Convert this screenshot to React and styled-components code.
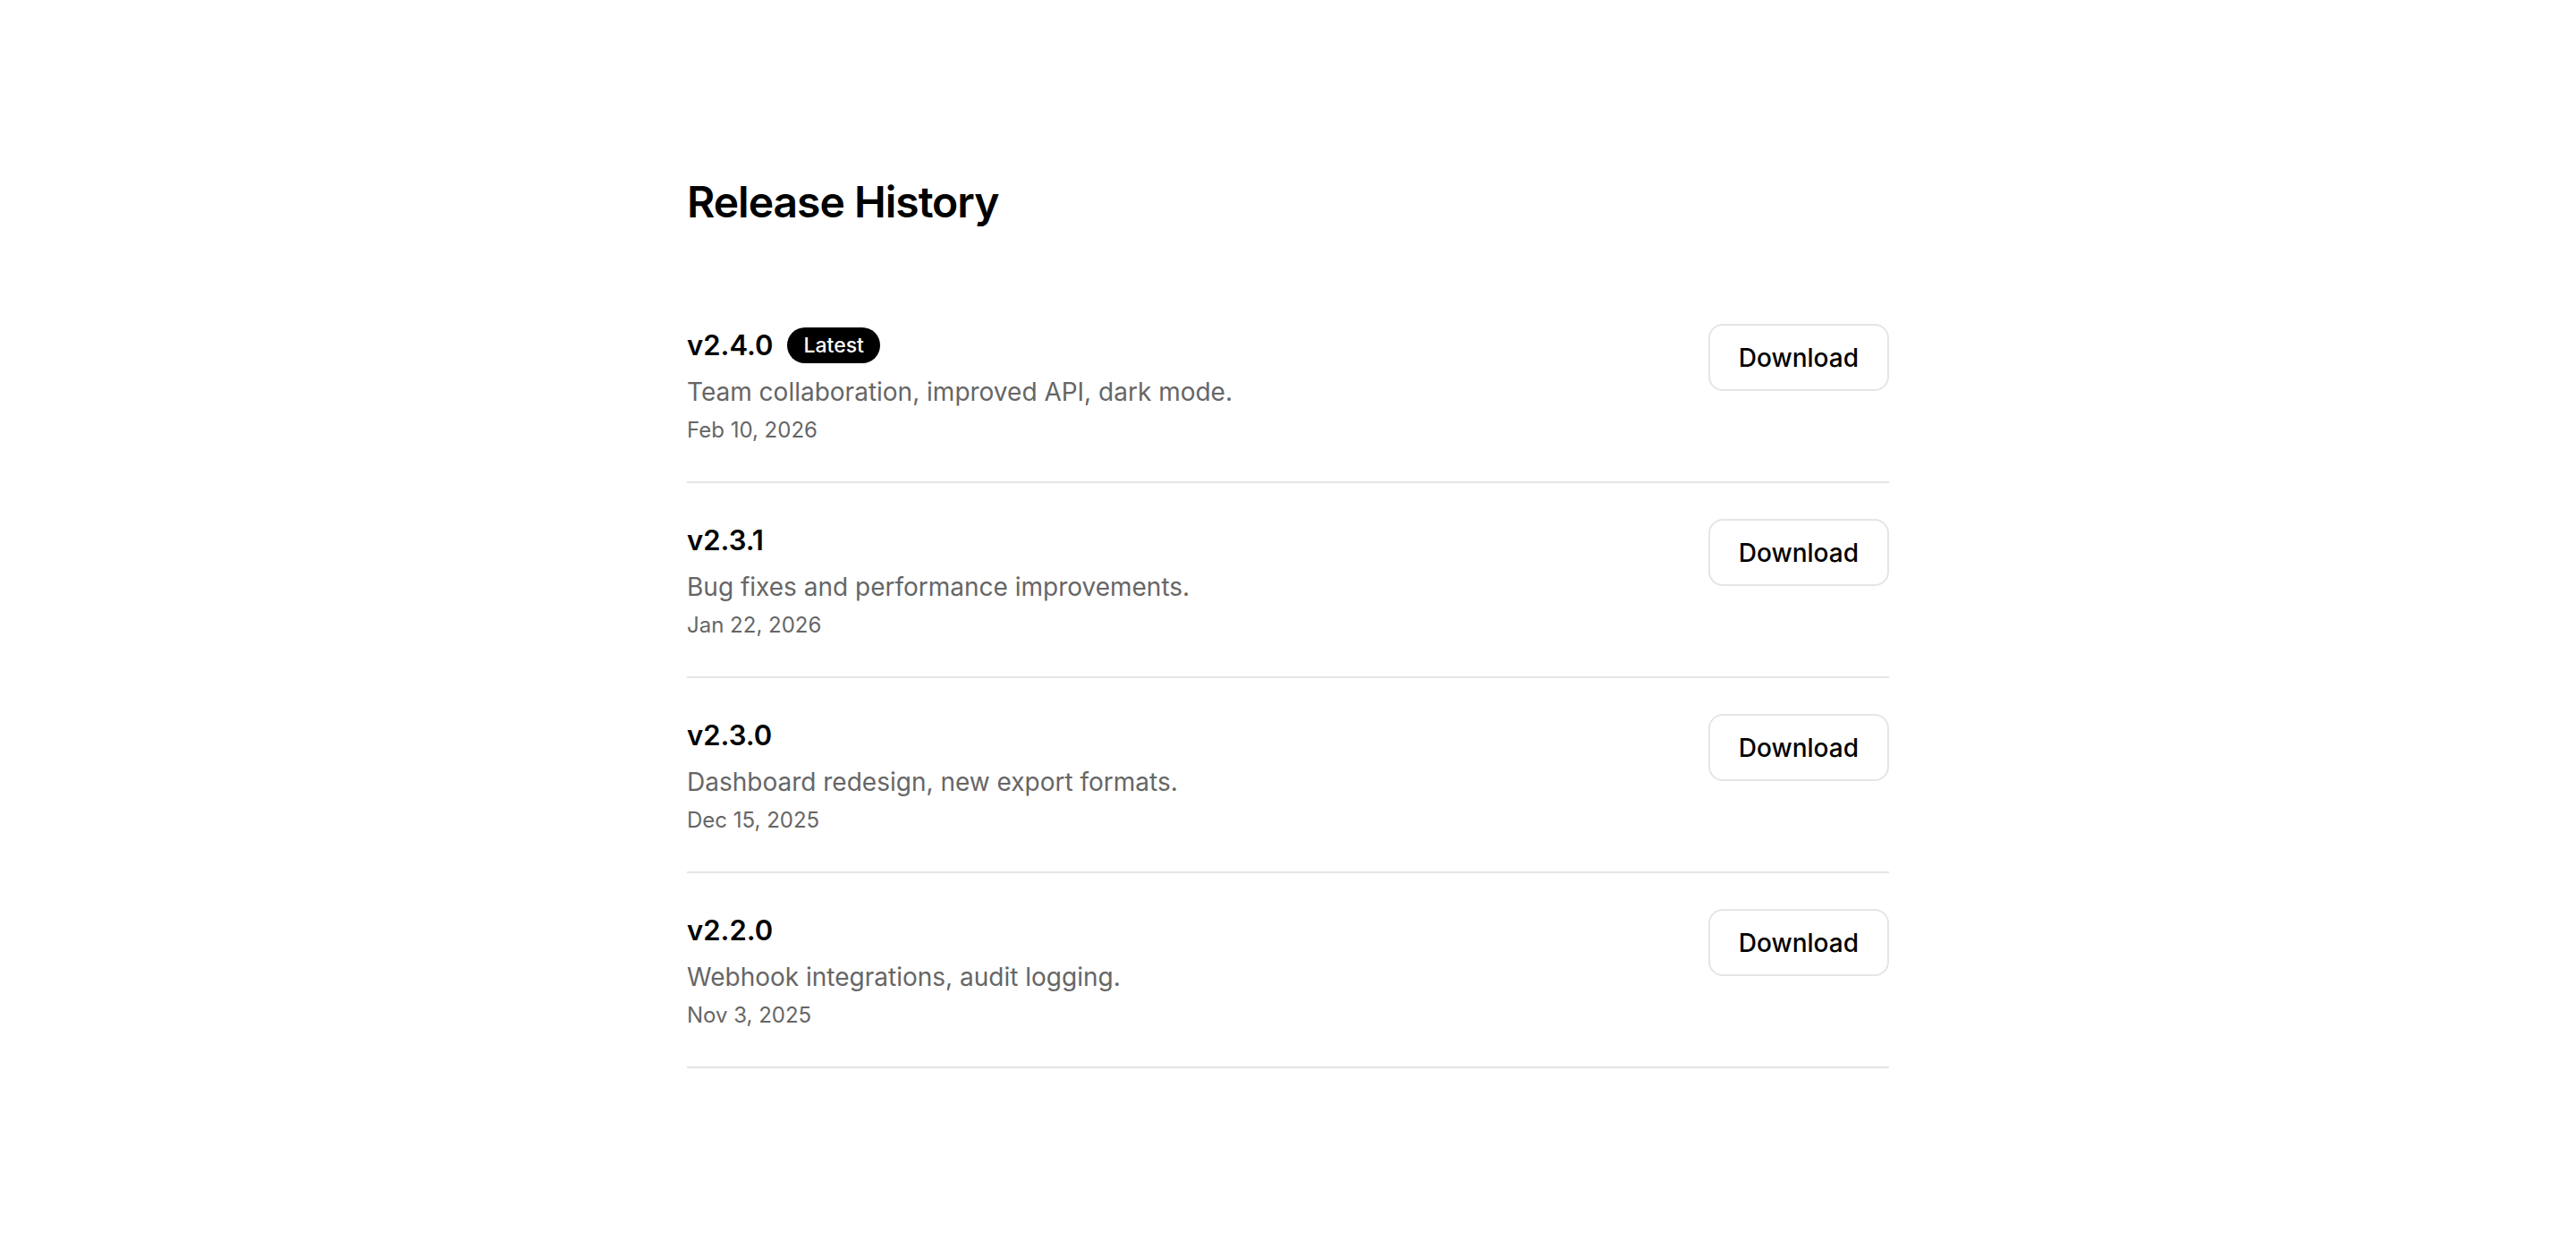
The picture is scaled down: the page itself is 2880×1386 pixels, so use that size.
import React from "react";
import styled, { createGlobalStyle } from "styled-components";

const GlobalStyle = createGlobalStyle`
  html, body {
    margin: 0;
    padding: 0;
    background: #ffffff;
  }
  body {
    font-family: Inter, "Noto Sans", "Liberation Sans", sans-serif;
    color: #000000;
    -webkit-font-smoothing: antialiased;
  }
`;

const Page = styled.main`
  display: flex;
  justify-content: center;
  padding: 197px 0 120px;
`;

const Container = styled.section`
  width: 1344px;
  display: flex;
  flex-direction: column;
`;

const Title = styled.h1`
  margin: 0 0 67px;
  font-size: 48px;
  line-height: 58px;
  font-weight: 600;
  letter-spacing: -1px;
  color: #000000;
`;

const List = styled.ul`
  list-style: none;
  margin: 0;
  padding: 0;
  display: flex;
  flex-direction: column;
`;

const Row = styled.li`
  display: flex;
  justify-content: space-between;
  align-items: flex-start;
  padding: 40px 0 39px;
  border-bottom: 2px solid #e5e5e5;
`;

const Info = styled.div`
  display: flex;
  flex-direction: column;
`;

const VersionLine = styled.div`
  display: flex;
  align-items: center;
  gap: 16px;
  height: 48px;
  margin-bottom: 7px;
`;

const Version = styled.span`
  font-size: 31px;
  line-height: 42px;
  font-weight: 600;
  color: #000000;
`;

const Badge = styled.span`
  display: inline-flex;
  align-items: center;
  height: 40px;
  padding: 0 18px;
  border-radius: 999px;
  background: #000000;
  color: #ffffff;
  font-size: 23px;
  font-weight: 500;
`;

const Description = styled.p`
  margin: 0;
  font-size: 28px;
  line-height: 42px;
  color: #666666;
`;

const Date = styled.span`
  margin-top: 4px;
  font-size: 24px;
  line-height: 36px;
  color: #666666;
`;

const DownloadButton = styled.button`
  height: 75px;
  padding: 0 32px;
  border: 2px solid #e5e5e5;
  border-radius: 16px;
  background: #ffffff;
  font-family: inherit;
  font-size: 28px;
  font-weight: 500;
  color: #000000;
  cursor: pointer;
`;

const releases = [
  {
    version: "v2.4.0",
    latest: true,
    description: "Team collaboration, improved API, dark mode.",
    date: "Feb 10, 2026",
  },
  {
    version: "v2.3.1",
    description: "Bug fixes and performance improvements.",
    date: "Jan 22, 2026",
  },
  {
    version: "v2.3.0",
    description: "Dashboard redesign, new export formats.",
    date: "Dec 15, 2025",
  },
  {
    version: "v2.2.0",
    description: "Webhook integrations, audit logging.",
    date: "Nov 3, 2025",
  },
];

export default function App() {
  return (
    <>
      <GlobalStyle />
      <Page>
        <Container>
          <Title>Release History</Title>
          <List>
            {releases.map((r) => (
              <Row key={r.version}>
                <Info>
                  <VersionLine>
                    <Version>{r.version}</Version>
                    {r.latest && <Badge>Latest</Badge>}
                  </VersionLine>
                  <Description>{r.description}</Description>
                  <Date>{r.date}</Date>
                </Info>
                <DownloadButton type="button">Download</DownloadButton>
              </Row>
            ))}
          </List>
        </Container>
      </Page>
    </>
  );
}
